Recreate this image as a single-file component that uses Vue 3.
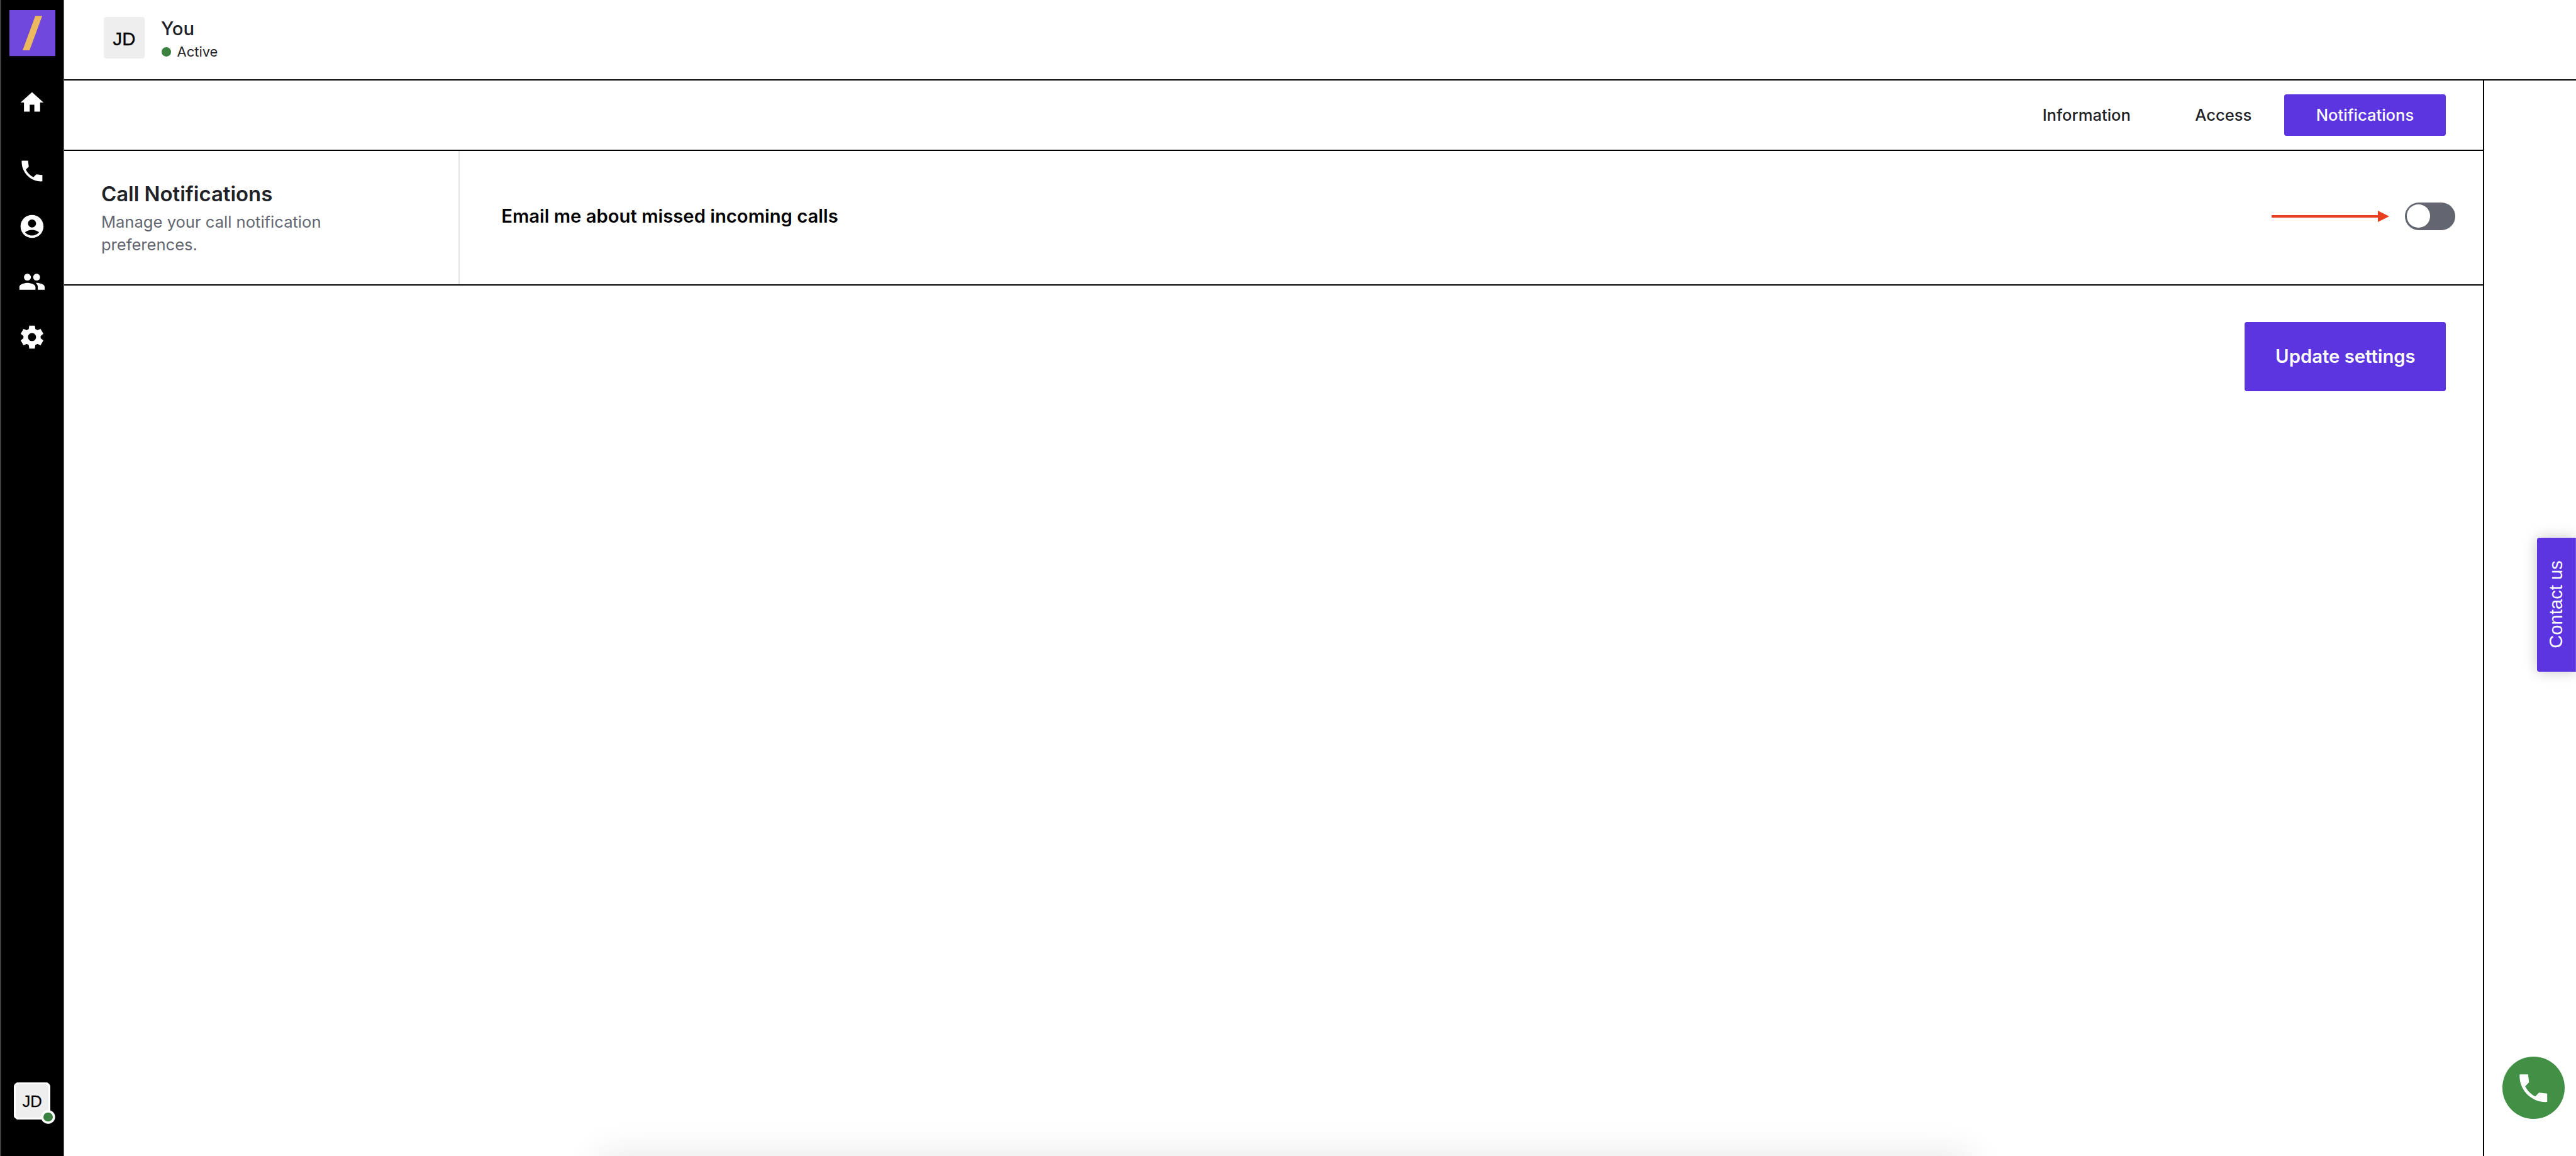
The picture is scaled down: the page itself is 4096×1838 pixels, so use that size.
<script setup>
const navIcons = [
  { name: 'home', d: 'M10 20v-6h4v6h5v-8h3L12 3 2 12h3v8z' },
  { name: 'phone', d: 'M21 15.46l-5.27-.61-2.52 2.52c-2.83-1.44-5.15-3.75-6.59-6.59l2.53-2.53L8.54 3H3.03C2.45 13.18 10.82 21.55 21 20.97v-5.51z' },
  { name: 'account', d: 'M12 2C6.48 2 2 6.48 2 12s4.48 10 10 10 10-4.48 10-10S17.52 2 12 2zm0 4c1.93 0 3.5 1.57 3.5 3.5S13.93 13 12 13s-3.5-1.57-3.5-3.5S10.07 6 12 6zm0 14c-2.03 0-4.43-.82-6.14-2.88C7.55 15.8 9.68 15 12 15s4.45.8 6.14 2.12C16.43 19.18 14.03 20 12 20z' },
  { name: 'people', d: 'M16 11c1.66 0 2.99-1.34 2.99-3S17.66 5 16 5c-1.66 0-3 1.34-3 3s1.34 3 3 3zm-8 0c1.66 0 2.99-1.34 2.99-3S9.66 5 8 5C6.34 5 5 6.34 5 8s1.34 3 3 3zm0 2c-2.33 0-7 1.17-7 3.5V19h14v-2.5c0-2.33-4.67-3.5-7-3.5zm8 0c-.29 0-.62.02-.97.05 1.16.84 1.97 1.97 1.97 3.45V19h6v-2.5c0-2.33-4.67-3.5-7-3.5z' },
  { name: 'settings', d: 'M19.44 12.99l-.01.02c.04-.33.08-.67.08-1.01 0-.34-.03-.66-.07-.99l.01.02 2.44-1.92-2.43-4.22-2.87 1.16.01.01c-.52-.4-1.09-.74-1.71-1h.01L14.44 2H9.57l-.44 3.07h.01c-.62.26-1.19.6-1.71 1l.01-.01-2.88-1.17-2.44 4.22 2.44 1.92.01-.02c-.04.33-.07.65-.07.99 0 .34.03.68.08 1.01l-.01-.02-2.1 1.65-.33.26 2.43 4.2 2.88-1.15-.02-.04c.53.41 1.1.75 1.73 1.01h-.03L9.58 22h4.85s.03-.18.06-.42l.38-2.65h-.01c.62-.26 1.2-.6 1.73-1.01l-.02.04 2.88 1.15 2.43-4.2s-.14-.12-.33-.26l-2.11-1.66zM12 15.5c-1.93 0-3.5-1.57-3.5-3.5s1.57-3.5 3.5-3.5 3.5 1.57 3.5 3.5-1.57 3.5-3.5 3.5z' },
]
const phone = navIcons[1].d
const tabs = [
  { label: 'Information', active: false },
  { label: 'Access', active: false },
  { label: 'Notifications', active: true },
]
</script>

<template>
  <div class="app">
    <aside class="sidebar">
      <svg class="logo" viewBox="0 0 80 80" aria-label="logo">
        <rect width="80" height="80" fill="#7048dc" />
        <path d="M45 10H57L35 70H23Z" fill="#edb95e" />
      </svg>
      <nav class="nav">
        <svg v-for="icon in navIcons" :key="icon.name" class="nav-icon" viewBox="0 0 24 24" fill="#fff">
          <path :d="icon.d" />
        </svg>
      </nav>
      <div class="side-avatar">
        JD
        <span class="side-dot"></span>
      </div>
    </aside>

    <div class="main">
      <header class="header">
        <div class="avatar">JD</div>
        <div class="who">
          <div class="name">You</div>
          <div class="status"><span class="status-dot"></span>Active</div>
        </div>
      </header>
      <div class="rule"></div>

      <div class="work">
        <section class="content">
          <div class="tabs">
            <button v-for="t in tabs" :key="t.label" class="tab" :class="{ active: t.active }">{{ t.label }}</button>
          </div>
          <div class="rule"></div>

          <div class="setting">
            <div class="setting-info">
              <h2>Call Notifications</h2>
              <p>Manage your call notification preferences.</p>
            </div>
            <div class="setting-control">
              <span class="setting-label">Email me about missed incoming calls</span>
              <div class="arrow"><span class="arrow-line"></span><span class="arrow-head"></span></div>
              <div class="toggle"><span class="knob"></span></div>
            </div>
          </div>
          <div class="rule"></div>

          <div class="actions">
            <button class="update">Update settings</button>
          </div>
        </section>
        <div class="vrule"></div>
        <div class="gutter"></div>
      </div>
    </div>

    <button class="contact"><span>Contact us</span></button>
    <button class="call">
      <svg viewBox="0 0 24 24" fill="#fff"><path :d="phone" /></svg>
    </button>
    <div class="bottom-glow"></div>
  </div>
</template>

<style>
html, body { margin: 0; background: #fff; overflow: hidden; }
</style>

<style scoped>
.app {
  zoom: 1.828571;
  position: relative;
  display: flex;
  width: 2240px;
  height: 1005.2px;
  overflow: hidden;
  background: #fff;
  font-family: Inter, "Liberation Sans", sans-serif;
  color: #1f2328;
}
.sidebar {
  box-sizing: border-box;
  flex: 0 0 56px;
  display: flex;
  flex-direction: column;
  align-items: center;
  padding: 9px 0 32px;
  background: #000;
  box-shadow: inset 1px 0 0 #444, inset -1px 0 0 #444;
}
.logo { width: 40px; height: 40px; display: block; }
.nav { display: flex; flex-direction: column; gap: 24px; margin-top: 28px; flex: 1; }
.nav-icon { width: 24px; height: 24px; display: block; }
.nav-icon:first-child { margin-bottom: 12px; }
.side-avatar {
  position: relative;
  box-sizing: border-box;
  width: 32px;
  height: 32px;
  padding-top: 1px;
  display: flex;
  align-items: center;
  justify-content: center;
  background: #eee;
  outline: 2px solid #fff;
  outline-offset: -2px;
  border-radius: 4px;
  font-family: "Liberation Sans", sans-serif;
  font-size: 14px;
  -webkit-text-stroke: 0.15px #000;
  color: #000;
}
.side-dot {
  position: absolute;
  right: -2px;
  bottom: -2px;
  width: 8px;
  height: 8px;
  border-radius: 50%;
  background: #3b8240;
  box-shadow: 0 0 0 2px #fff;
}
.main { flex: 1; min-width: 0; display: flex; flex-direction: column; }
.header {
  box-sizing: border-box;
  height: 69px;
  padding: 0 0 3px 34px;
  display: flex;
  align-items: center;
  gap: 14px;
}
.avatar {
  box-sizing: border-box;
  width: 36px;
  height: 36px;
  padding-top: 2px;
  display: flex;
  align-items: center;
  justify-content: center;
  background: #eee;
  border-radius: 2px;
  font-family: "Liberation Sans", sans-serif;
  font-size: 16px;
  -webkit-text-stroke: 0.2px #000;
  color: #000;
}
.name { font-size: 16px; line-height: 24px; font-weight: 500; }
.status { display: flex; align-items: center; gap: 5.5px; font-size: 12px; line-height: 16px; padding-left: 0.5px; }
.status-dot { width: 8px; height: 8px; border-radius: 50%; background: #3b8240; }
.rule { height: 0; border-top: 1.1px solid #000; margin-bottom: -0.1px; flex: none; }
.vrule { width: 0; border-left: 1.1px solid #000; margin-right: -0.1px; flex: none; }
.work { flex: 1; min-height: 0; display: flex; }
.content { flex: 1; min-width: 0; display: flex; flex-direction: column; }
.gutter { flex: 0 0 80px; }
.tabs {
  box-sizing: border-box;
  height: 60px;
  padding: 0 32px 0 0;
  display: flex;
  align-items: center;
  justify-content: flex-end;
}
.tab {
  height: 36px;
  padding: 0 28px;
  border: 0;
  border-radius: 2px;
  background: transparent;
  font-family: inherit;
  font-size: 14px;
  font-weight: 500;
  color: #1f2328;
}
.tab.active { background: #5c35e0; color: #fff; }
.setting { height: 116px; display: flex; flex: none; }
.setting-info {
  box-sizing: border-box;
  width: 344px;
  padding-left: 32px;
  display: flex;
  flex-direction: column;
  justify-content: center;
  border-right: 1.1px solid #e0e1e4;
}
.setting-info h2 { margin: 0; font-size: 18px; line-height: 28px; font-weight: 600; }
.setting-info p { margin: 0; width: 220px; font-size: 14px; line-height: 20px; color: #636670; }
.setting-control {
  flex: 1;
  display: flex;
  align-items: center;
  padding: 0 24px 2px 36px;
}
.setting-label { flex: 1; font-size: 16px; font-weight: 600; color: #000; }
.arrow { display: flex; align-items: center; width: 102px; margin-right: 13.5px; }
.arrow-line { flex: 1; height: 2px; background: #e8401f; }
.arrow-head {
  width: 0;
  height: 0;
  border-left: 10px solid #e8401f;
  border-top: 5px solid transparent;
  border-bottom: 5px solid transparent;
}
.toggle {
  box-sizing: border-box;
  width: 44px;
  height: 24px;
  padding: 2px;
  border-radius: 12px;
  background: #636670;
}
.knob { display: block; width: 20px; height: 20px; border-radius: 50%; background: #fff; }
.actions { display: flex; justify-content: flex-end; padding: 32px 32px 0 0; }
.update {
  width: 175px;
  height: 60px;
  border: 0;
  border-radius: 2px;
  background: #5c35e0;
  color: #fff;
  font-family: inherit;
  font-size: 16px;
  font-weight: 600;
}
.contact {
  position: absolute;
  right: 0;
  top: 467.5px;
  box-sizing: border-box;
  width: 34px;
  height: 116.5px;
  padding: 0;
  display: flex;
  align-items: center;
  justify-content: center;
  border: 0;
  border-right: 1px solid #7a5ae0;
  border-radius: 2px 0 0 2px;
  background: #5c35e0;
  color: #fff;
  font-family: "Liberation Sans", sans-serif;
  font-size: 16px;
  box-shadow: 0 0 12px rgba(0, 0, 0, 0.22);
}
.contact span { writing-mode: vertical-rl; transform: rotate(180deg); }
.call {
  position: absolute;
  right: 10px;
  top: 919px;
  width: 54px;
  height: 54px;
  padding: 0;
  display: flex;
  align-items: center;
  justify-content: center;
  border: 0;
  border-radius: 50%;
  background: #419046;
}
.call svg { width: 32px; height: 32px; display: block; }
.bottom-glow {
  position: absolute;
  left: 520px;
  width: 1195px;
  top: 1005.2px;
  height: 20px;
  box-shadow: 0 0 30px rgba(0, 0, 0, 0.12);
}
</style>
